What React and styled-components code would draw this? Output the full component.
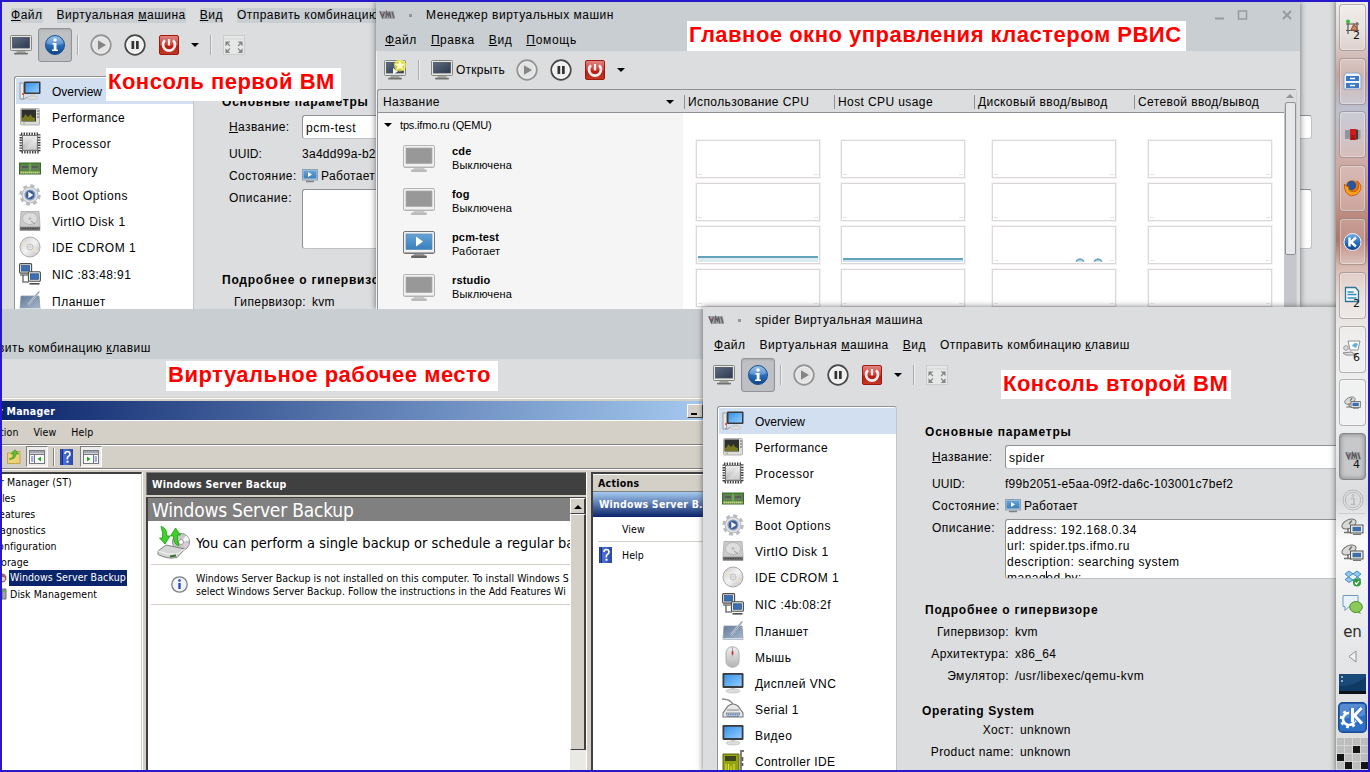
import React from "react";
import styled, { createGlobalStyle, css } from "styled-components";

const GlobalStyle = createGlobalStyle`
  * { box-sizing: border-box; }
  html, body { margin: 0; padding: 0; overflow: hidden; }
  body { font-family: "Liberation Sans", Arial, sans-serif; font-size: 12px; color: #000; }
  svg { display: block; flex: none; }
`;

const tahoma = css`font-family: "DejaVu Sans Condensed", "DejaVu Sans", sans-serif; font-stretch: condensed;`;

const Desktop = styled.div`
  position: relative;
  width: 1370px;
  height: 772px;
  overflow: hidden;
  background: #dcddde;
  &::after {
    content: "";
    position: absolute;
    inset: 0;
    border: 2px solid #2519c9;
    z-index: 20;
    pointer-events: none;
  }
`;

const Window = styled.section`
  position: absolute;
  left: ${(p) => p.$x}px;
  top: ${(p) => p.$y}px;
  width: ${(p) => p.$w}px;
  height: ${(p) => p.$h}px;
  display: flex;
  flex-direction: column;
  overflow: hidden;
  background: #dcddde;
  box-shadow: ${(p) => (p.$shadow ? "0 0 6px rgba(40,40,40,0.65)" : "none")};
`;

const Callout = styled.div`
  position: absolute;
  left: ${(p) => p.$x}px;
  top: ${(p) => p.$y}px;
  width: ${(p) => p.$w}px;
  height: ${(p) => p.$h}px;
  padding-left: 2px;
  z-index: 10;
  background: #fff;
  color: #fe0000;
  font-size: 22px;
  font-weight: bold;
  line-height: 28px;
  letter-spacing: 0.5px;
  white-space: nowrap;
`;

const Text = styled.span`
  letter-spacing: ${(p) => p.$ls ?? 0.3}px;
  white-space: nowrap;
`;

/* ---------- shared KDE window parts ---------- */

const TitleBar = styled.div`
  display: flex;
  align-items: center;
  height: ${(p) => p.$h}px;
  padding: 3px 1px 0 ${(p) => p.$pad}px;
  flex: none;
`;
const TitleDot = styled.i`
  width: 3px;
  height: 3px;
  margin: 0 14px;
  background: #93979a;
`;
const TitleButtons = styled.div`
  display: flex;
  margin-left: auto;
`;
const MenuBar = styled.nav`
  display: flex;
  gap: 14px;
  height: ${(p) => p.$h}px;
  padding: ${(p) => p.$top}px 0 0 ${(p) => p.$left}px;
  line-height: 15px;
  flex: none;
`;
const MenuItem = styled.span`
  white-space: nowrap;
  letter-spacing: ${(p) => p.$ls ?? 0.5}px;
  background: ${(p) => (p.$marked ? "#c9ced2" : "transparent")};
  height: 15px;
`;
const ToolBar = styled.div`
  display: flex;
  align-items: center;
  height: ${(p) => p.$h}px;
  padding-left: ${(p) => p.$left}px;
  flex: none;
`;
const ToolSlot = styled.div`
  display: flex;
  align-items: center;
  justify-content: center;
  gap: 3px;
  width: ${(p) => p.$w}px;
  height: 34px;
  flex: none;
`;
const PressedButton = styled(ToolSlot)`
  background: #bec0c3;
  border: 1px solid #909296;
  border-radius: 3px;
  box-shadow: inset 0 1px 2px rgba(0, 0, 0, 0.12);
`;
const Divider = styled.i`
  width: 2px;
  height: 20px;
  background: #a9abae;
  border-right: 1px solid #f0f0f0;
`;
const Caret = styled.i`
  border: 4px solid transparent;
  border-top-color: #000;
  border-bottom: 0;
`;

/* ---------- console window ---------- */

const ConsoleBody = styled.div`
  display: flex;
  flex: 1;
  padding: 14px 0 0 14px;
  min-height: 0;
`;
const DeviceList = styled.ul`
  width: 180px;
  margin: 0;
  padding: 1px 0 0 1px;
  list-style: none;
  background: #fff;
  border: 1px solid #8f9196;
  border-right-color: #c3c5c8;
  border-bottom: 0;
  border-radius: 3px 3px 0 0;
  flex: none;
  overflow: hidden;
`;
const Device = styled.li`
  display: flex;
  align-items: center;
  height: ${(p) => p.$h}px;
  padding-left: 3px;
  gap: 11px;
  background: ${(p) => (p.$selected ? "#d2dff0" : "transparent")};
`;
const DeviceName = styled(Text)`
  padding-top: 2px;
`;
const Details = styled.div`
  flex: 1;
  padding: 18px 0 0 28px;
  min-width: 0;
`;
const Heading = styled.h3`
  margin: ${(p) => p.$top || 0}px 0 0 ${(p) => p.$left || 0}px;
  height: 16px;
  font-size: 12px;
  line-height: 16px;
  letter-spacing: ${(p) => p.$ls}px;
  white-space: nowrap;
`;
const Field = styled.div`
  display: flex;
  height: ${(p) => p.$h || 22}px;
  margin-top: ${(p) => p.$top || 0}px;
  line-height: ${(p) => p.$lh || 22}px;
  padding-left: 7px;
`;
const FieldLabel = styled.label`
  width: 73px;
  flex: none;
  white-space: nowrap;
  letter-spacing: ${(p) => p.$ls ?? 0.4}px;
`;
const FieldValue = styled.div`
  display: flex;
  align-items: center;
  gap: 3px;
  white-space: nowrap;
  letter-spacing: ${(p) => p.$ls ?? 0.28}px;
`;
const TextBox = styled.div`
  width: ${(p) => p.$w}px;
  height: ${(p) => p.$h}px;
  margin-top: ${(p) => p.$top || 0}px;
  padding: ${(p) => p.$pad};
  flex: none;
  overflow: hidden;
  background: #fff;
  border: 1px solid #c0c2c5;
  border-top: 1px solid #8f9196;
  border-left-color: #8f9196;
  border-radius: 3px;
  line-height: ${(p) => p.$lh}px;
  letter-spacing: 0.5px;
  white-space: pre;
`;
const TextCursor = styled.i`
  display: inline-block;
  width: 1px;
  height: 13px;
  margin-right: -1px;
  vertical-align: -2px;
  background: #000;
`;
const SpecList = styled.div`
  padding-top: 3px;
`;
const Spec = styled.div`
  display: flex;
  gap: 6px;
  height: 22px;
  line-height: 22px;
  white-space: nowrap;
`;
const SpecLabel = styled.span`
  width: ${(p) => p.$w}px;
  text-align: right;
  letter-spacing: 0.4px;
`;

/* ---------- manager window ---------- */

const ManagerTop = styled.div`
  background: #c9ced2;
  height: 49px;
  flex: none;
`;
const ManagerFrame = styled.div`
  flex: 1;
  display: flex;
  flex-direction: column;
  margin-right: 3px;
  border-left: 1px solid #f0f1f2;
`;
const TableArea = styled.div`
  display: flex;
  flex: 1;
  border: 1px solid #8f9196;
  border-right-color: #cfd0d3;
  border-bottom: 0;
  border-radius: 3px 3px 0 0;
`;
const Table = styled.div`
  flex: 1;
  display: flex;
  flex-direction: column;
`;
const TableHead = styled.div`
  display: grid;
  grid-template-columns: 306px 150px 140px 160px 1fr;
  height: 23px;
  align-items: center;
  padding-top: 1px;
  border-bottom: 1px solid #8f9196;
`;
const HeadCell = styled.div`
  display: flex;
  align-items: center;
  justify-content: space-between;
  height: 14px;
  padding: 0 ${(p) => (p.$first ? 10 : 0)}px 0 ${(p) => (p.$first ? 5 : 3)}px;
  border-left: ${(p) => (p.$first ? 0 : 1)}px solid #8f9196;
  white-space: nowrap;
  letter-spacing: 0.4px;
`;
const TableBody = styled.div`
  display: flex;
  flex: 1;
  background: #fff;
`;
const NameColumn = styled.div`
  width: 305px;
  padding-top: 3px;
  background: #f5f5f5;
  font-size: 11px;
  flex: none;
`;
const GroupRow = styled.div`
  display: flex;
  align-items: center;
  gap: 8px;
  height: 19px;
  padding: 0 0 2px 6px;
  letter-spacing: -0.18px;
`;
const MachineRow = styled.div`
  display: flex;
  gap: 17px;
  height: 43px;
  padding: 10px 0 0 25px;
`;
const MachineText = styled.div`
  display: flex;
  flex-direction: column;
  line-height: 14px;
  margin-top: -1px;
  letter-spacing: 0.15px;
`;
const GraphGrid = styled.div`
  display: grid;
  grid-template-columns: 145px 151px 156px 126px;
  grid-auto-rows: 43px;
  padding: 27px 0 0 13px;
`;
const GraphBox = styled.div`
  width: 124px;
  height: 38px;
  border: 1px solid #dcd7d9;
  outline: 1px solid #f5f2f3;
  padding: 1px;
`;
const ScrollColumn = styled.div`
  width: 12px;
  display: flex;
  flex-direction: column;
  align-items: center;
  background: linear-gradient(#dcddde 12px, #c5c7cc 20px);
  flex: none;
`;
const ScrollThumb = styled.div`
  width: 11px;
  height: 153px;
  background: #e6e7e9;
  border: 1px solid #8f9196;
  border-radius: 2px;
  margin-top: 4px;
`;
const UpArrow = styled.i`
  margin-top: 4px;
  border: 4px solid transparent;
  border-bottom-color: #909296;
  border-top: 0;
`;

/* ---------- remote Windows desktop ---------- */

const RemoteTop = styled.div`
  display: flex;
  height: 50px;
  background: #c9ced2;
  padding-top: 32px;
  line-height: 15px;
  flex: none;
`;
const RemoteMenuItem = styled(MenuItem)`
  margin-left: -4px;
`;
const RemoteTools = styled.div`
  height: 38px;
  background: #dcddde;
  flex: none;
`;
const WinShell = styled.div`
  ${tahoma}
  display: flex;
  flex-direction: column;
  flex: 1;
  background: #d4d0c8;
  border-top: 1px solid #d4d0c8;
  box-shadow: inset 0 1px #fff;
  padding-top: 3px;
  font-size: 10.5px;
  letter-spacing: 0.1px;
  color: #000;
  min-height: 0;
`;
const WinCaption = styled.div`
  display: flex;
  align-items: center;
  justify-content: space-between;
  height: 19px;
  background: linear-gradient(90deg, #0a246a, #5a7ab0 50%, #a6caf0);
  color: #fff;
  font-weight: bold;
  padding-right: 9px;
  letter-spacing: 0.28px;
  flex: none;
`;
const CaptionText = styled.span`
  margin-left: -4px;
`;
const WinMinimize = styled.div`
  width: 16px;
  height: 14px;
  background: #d4d0c8;
  border: 1px solid #fff;
  border-right-color: #404040;
  border-bottom-color: #404040;
  padding: 8px 0 0 3px;
  &::after { content: ""; display: block; width: 6px; height: 2px; background: #000; }
`;
const WinBand = styled.div`
  display: flex;
  align-items: center;
  height: ${(p) => p.$h}px;
  border-bottom: 1px solid #808080;
  box-shadow: inset 0 1px #fff;
  padding-left: ${(p) => p.$left || 0}px;
  gap: ${(p) => p.$gap || 0}px;
  flex: none;
`;
const WinMenu = styled.span`
  margin-left: ${(p) => p.$shift || 0}px;
`;
const WinToggle = styled.div`
  width: 22px;
  height: 21px;
  margin-left: ${(p) => p.$shift || 0}px;
  display: flex;
  align-items: center;
  justify-content: center;
  border: 1px solid #808080;
  border-right-color: #fff;
  border-bottom-color: #fff;
  background: #eeece8;
`;
const WinSep = styled.i`
  width: 2px;
  height: 18px;
  background: #808080;
  border-right: 1px solid #fff;
`;
const WinPanes = styled.div`
  display: flex;
  flex: 1;
  padding-top: 3px;
  box-shadow: inset 0 1px #fff;
  min-height: 0;
`;
const TreePane = styled.div`
  width: 140px;
  background: #fff;
  border-top: 2px solid #404040;
  border-right: 1px solid #d4d0c8;
  box-shadow: 1px 0 #fff;
  margin-right: 4px;
  flex: none;
  overflow: hidden;
`;
const TreeRow = styled.div`
  display: flex;
  align-items: center;
  height: 16px;
  margin-left: ${(p) => p.$left}px;
  white-space: nowrap;
`;
const TreeSelected = styled.span`
  background: #0a246a;
  color: #fff;
  height: 16px;
  line-height: 15px;
  padding: 0 1px;
`;
const CenterPane = styled.div`
  width: 441px;
  display: flex;
  flex-direction: column;
  border-right: 1px solid #fff;
  margin-right: 4px;
  flex: none;
`;
const CenterHead = styled.div`
  height: 23px;
  line-height: 22px;
  padding-left: 5px;
  background: #404040;
  border-left: 1px solid #808080;
  border-top: 1px solid #808080;
  color: #fff;
  font-weight: bold;
  letter-spacing: 0.28px;
  flex: none;
`;
const CenterBody = styled.div`
  display: flex;
  flex: 1;
  margin-top: 2px;
  border-top: 1px solid #404040;
  border-left: 2px solid #404040;
  min-height: 0;
`;
const CenterContent = styled.div`
  flex: 1;
  background: #fff;
  overflow: hidden;
  min-width: 0;
`;
const BannerTitle = styled.div`
  height: 23px;
  background: #808080;
  color: #fff;
  font-size: 19px;
  line-height: 24px;
  padding-left: 4px;
  white-space: nowrap;
  letter-spacing: -0.2px;
`;
const PitchRow = styled.div`
  display: flex;
  align-items: center;
  gap: 6px;
  height: 44px;
  margin-left: 3px;
  padding-left: 6px;
  font-size: 14.5px;
  letter-spacing: 0.05px;
  border-bottom: 1px solid #d4d0c8;
  white-space: nowrap;
`;
const NoticeRow = styled.div`
  display: flex;
  align-items: center;
  gap: 8px;
  height: 40px;
  margin-left: 3px;
  padding-left: 20px;
  line-height: 13px;
  letter-spacing: 0.04px;
  border-bottom: 1px solid #d4d0c8;
  white-space: pre;
`;
const WinScroll = styled.div`
  width: 16px;
  background: #ebe9e5;
  display: flex;
  flex-direction: column;
  flex: none;
`;
const WinScrollPart = styled.div`
  height: ${(p) => p.$h}px;
  display: flex;
  justify-content: center;
  padding-top: 6px;
  background: #d4d0c8;
  border: 1px solid #fff;
  border-right: 2px solid #404040;
  border-bottom: 1px solid #404040;
  flex: none;
`;
const BlackUp = styled.i`
  height: 0;
  border: 4px solid transparent;
  border-bottom-color: #000;
  border-top: 0;
`;
const ActionPane = styled.div`
  flex: 1;
  background: #fff;
  border-top: 2px solid #404040;
  border-left: 2px solid #404040;
  overflow: hidden;
  white-space: nowrap;
`;
const ActionHead = styled.div`
  height: 18px;
  line-height: 17px;
  background: #d4d0c8;
  border-top: 1px solid #fff;
  border-bottom: 1px solid #808080;
  font-weight: bold;
  padding-left: 5px;
  letter-spacing: 0.28px;
`;
const ActionGroup = styled.div`
  height: 25px;
  line-height: 25px;
  background: linear-gradient(#a6caf0, #0a246a);
  color: #fff;
  font-weight: bold;
  padding-left: 6px;
  letter-spacing: 0.2px;
`;
const ActionItem = styled.div`
  display: flex;
  align-items: center;
  gap: 10px;
  height: 25px;
  margin-left: 5px;
  padding-left: ${(p) => p.$left}px;
  border-bottom: ${(p) => (p.$rule ? 1 : 0)}px solid #d4d0c8;
`;

/* ---------- task bar ---------- */

const TaskBar = styled.aside`
  position: absolute;
  right: 0;
  top: 0;
  width: 34px;
  height: 772px;
  padding: 4px 4px 2px 3px;
  display: flex;
  flex-direction: column;
  z-index: 5;
  background: linear-gradient(180deg, #f0edeb 0, #e0d7d3 35px, #c4a49f 75px, #bcc0cf 110px, #cfa9a3 165px, #c79b91 195px, #b07468 240px, #d8bcb3 268px, #e6dedb 300px, #ececec 345px, #eeeff0 420px, #d9dbdc 500px, #fbfbfb 540px, #e4e5e6 660px, #dcdddd 100%);
  box-shadow: 0 0 6px rgba(40, 40, 40, 0.7);
`;
const TaskButton = styled.div`
  width: 27px;
  height: 47px;
  margin-bottom: ${(p) => p.$gap ?? 6.6}px;
  display: flex;
  align-items: center;
  justify-content: center;
  position: relative;
  flex: none;
  border: 1px solid ${(p) => (p.$active ? "#85878a" : "rgba(120,110,110,0.5)")};
  border-radius: 4px;
  background: ${(p) => (p.$active ? "#c6c8ca" : "rgba(255,255,255,0.2)")};
  box-shadow: ${(p) => (p.$active ? "inset 0 0 5px rgba(0,0,0,0.4)" : "inset 0 0 0 1px rgba(255,255,255,0.35)")};
`;
const Count = styled.span`
  position: absolute;
  right: 5px;
  bottom: 8px;
  font-family: "DejaVu Sans", sans-serif;
  font-size: 11px;
  line-height: 12px;
  color: #111;
`;
const TrayItem = styled.div`
  height: ${(p) => p.$h}px;
  width: 27px;
  display: flex;
  align-items: center;
  justify-content: center;
  border-bottom: ${(p) => (p.$rule ? "1px solid #cccdce" : "0")};
  flex: none;
`;
const Layout = styled(TrayItem)`
  font-family: "DejaVu Sans", sans-serif;
  font-size: 15px;
  color: #2b2b2b;
`;
const Pager = styled.div`
  display: grid;
  grid-template-columns: repeat(4, 8px);
  grid-auto-rows: 8px;
  margin: 2px -4px 0 -2px;
  background: #c3c3c3;
`;
const PagerCell = styled.i`
  background: ${(p) => (p.$on ? "#141414" : "#bdbdbd")};
  border: solid #d4d4d4;
  border-width: 0 1px 1px 0;
`;

/* ---------- icons ---------- */

const HiddenSvg = styled.svg`
  position: absolute;
`;
const Defs = () => (
  <HiddenSvg width="0" height="0" aria-hidden="true">
    <defs>
      <linearGradient id="navy" x1="0" y1="0" x2="1" y2="1"><stop offset="0" stopColor="#5c6b81" /><stop offset="1" stopColor="#2d3a4d" /></linearGradient>
      <linearGradient id="sky" x1="0" y1="0" x2="1" y2="1"><stop offset="0" stopColor="#3b93e6" /><stop offset="1" stopColor="#8fcbff" /></linearGradient>
      <linearGradient id="steel" x1="0" y1="0" x2="0" y2="1"><stop offset="0" stopColor="#eeeeee" /><stop offset="1" stopColor="#b4b4b4" /></linearGradient>
      <linearGradient id="blueball" x1="0" y1="0" x2="0" y2="1"><stop offset="0" stopColor="#7fb2e3" /><stop offset=".5" stopColor="#2a70bd" /><stop offset="1" stopColor="#0d4187" /></linearGradient>
      <linearGradient id="red" x1="0" y1="0" x2="0" y2="1"><stop offset="0" stopColor="#e28a84" /><stop offset=".5" stopColor="#cb3b31" /><stop offset=".55" stopColor="#b51d12" /><stop offset="1" stopColor="#c33a25" /></linearGradient>
      <linearGradient id="bluescreen" x1="0" y1="0" x2="0" y2="1"><stop offset="0" stopColor="#65a3d8" /><stop offset="1" stopColor="#3a7ebc" /></linearGradient>
      <linearGradient id="disc" x1="0" y1="0" x2="1" y2="1"><stop offset="0" stopColor="#c9c9d0" /><stop offset=".5" stopColor="#f3f2f2" /><stop offset="1" stopColor="#bcbcc2" /></linearGradient>
      <linearGradient id="tablet" x1="0" y1="0" x2="1" y2="1"><stop offset="0" stopColor="#637a99" /><stop offset="1" stopColor="#a9bacd" /></linearGradient>
      <linearGradient id="winhelp" x1="0" y1="0" x2="1" y2="0"><stop offset="0" stopColor="#1d3a96" /><stop offset=".3" stopColor="#4c6fdc" /><stop offset="1" stopColor="#2b47a6" /></linearGradient>
    </defs>
  </HiddenSvg>
);

const Monitor = ({ star }) => (
  <svg width="22" height="20" viewBox="0 0 22 20">
    <rect x=".5" y=".5" width="21" height="15" rx="1" fill="#e6e7e4" stroke="#858783" />
    <rect x="2.500" y="2.500" width="17" height="10.500" fill="url(#navy)" stroke="#4a5361" strokeWidth=".8" />
    <path d="M7 16h8l1 2H6z" fill="#a5a7a3" />
    <rect x="4" y="17.700" width="14" height="1.800" rx=".9" fill="#6f716d" />
    {star && (
      <g>
        <path d="M9 8l5 3.500-5 3z" fill="#f4f4f4" />
        <circle cx="16" cy="5.500" r="6" fill="#f6f04c" opacity=".75" />
        <path d="M16 -.2l1.600 3.700 4.200.3-3.300 2.600 1.200 4.200-3.700-2.300-3.700 2.300 1.200-4.200-3.300-2.600 4.200-.3z" fill="#fffbd0" stroke="#efe235" strokeWidth=".6" />
      </g>
    )}
  </svg>
);
const InfoBall = () => (
  <svg width="22" height="22" viewBox="0 0 22 22">
    <circle cx="11" cy="11" r="9.500" fill="url(#blueball)" stroke="#1b4f92" />
    <path d="M2.500 9.500a8.600 8.600 0 0 1 17 0q-8.500 3-17 0z" fill="#fff" opacity=".22" />
    <circle cx="11" cy="6" r="1.800" fill="#fff" />
    <path d="M8.500 9h4v6.500h1.500V17h-6v-1.500h1.700v-5H8.500z" fill="#fff" />
  </svg>
);
const Play = () => (
  <svg width="22" height="22" viewBox="0 0 22 22">
    <circle cx="11" cy="11" r="9.700" fill="#e3e3e3" stroke="#959595" strokeWidth="1.900" />
    <circle cx="11" cy="11" r="8.200" fill="none" stroke="#f5f5f5" strokeWidth=".8" />
    <path d="M8 6.200l8 4.800-8 4.800z" fill="#858585" />
  </svg>
);
const Pause = () => (
  <svg width="22" height="22" viewBox="0 0 22 22">
    <circle cx="11" cy="11" r="9.700" fill="#efefef" stroke="#4a4a4a" strokeWidth="1.900" />
    <circle cx="11" cy="11" r="8.200" fill="none" stroke="#fff" strokeWidth="1" />
    <rect x="7.500" y="7" width="2.700" height="8" fill="#333" />
    <rect x="12" y="7" width="2.700" height="8" fill="#333" />
  </svg>
);
const Power = () => (
  <svg width="20" height="20" viewBox="0 0 20 20">
    <rect x=".5" y=".5" width="19" height="19" rx="1.500" fill="url(#red)" stroke="#a3170d" />
    <path d="M6 5.200a6 6 0 1 0 8 0" fill="none" stroke="#f6eeee" strokeWidth="2.700" />
    <path d="M10 4v6.500" stroke="#f6eeee" strokeWidth="2.300" />
  </svg>
);
const Fullscreen = () => (
  <svg width="22" height="20" viewBox="0 0 22 20">
    <rect x=".5" y=".5" width="21" height="19" fill="#e6e7e7" stroke="#cbcccc" />
    <path d="M1 4h20" stroke="#d2d3d3" />
    <path d="M3 7h3l-3 3zM4 8l3 3M19 7h-3l3 3zM18 8l-3 3M3 17.500h3l-3-3zM4 16.500l3-3M19 17.500h-3l3-3zM18 16.500l-3-3" fill="#858787" stroke="#858787" strokeWidth="1.100" />
  </svg>
);
const VmLogo = () => (
  <svg width="16" height="10" viewBox="0 0 16 10">
    <path d="M0 1h15l1 8H3z" fill="#a5a5a8" />
    <path d="M1 1.500l2.500 6L5.500 2M7 8l.5-6 2 4 1-4 1.200 6M13 2l2 6" stroke="#5d5e62" strokeWidth="1.300" fill="none" />
    <path d="M3 4l2 1" stroke="#a5434a" />
  </svg>
);
const BigMonitor = ({ on }) => (
  <svg width="32" height="28" viewBox="0 0 32 28">
    <rect x=".5" y=".5" width="31" height="22" rx="1.500" fill="#f1f1f1" stroke={on ? "#777" : "#b5b5b5"} />
    <rect x="3" y="3" width="26" height="15.500" fill={on ? "url(#bluescreen)" : "#989898"} stroke={on ? "#5b8cb5" : "#aaa"} strokeWidth=".7" />
    {on && <path d="M13 5.500l7 5-7 5z" fill="#fff" />}
    <path d="M1 21.500h30" stroke={on ? "#a9a9a9" : "#d5d5d5"} />
    <path d="M11 23h10l1 2H10z" fill={on ? "#999" : "#c9c9c9"} />
    <rect x="8" y="24.500" width="16" height="2.500" rx="1.200" fill={on ? "#666" : "#bababa"} />
  </svg>
);
const StateIcon = () => (
  <svg width="16" height="14" viewBox="0 0 16 14">
    <rect x=".5" y=".5" width="15" height="10.500" fill="#c5d3df" stroke="#8ba0b1" />
    <rect x="1.500" y="1.500" width="13" height="8" fill="url(#bluescreen)" />
    <path d="M6 3l4 2.500L6 8z" fill="#fff" />
    <path d="M4 12.500h8" stroke="#7e8286" strokeWidth="1.500" />
  </svg>
);

const DeviceIcon = ({ kind }) => {
  const art = {
    overview: (
      <g>
        <rect x="1" y="3" width="3.500" height="16" fill="#e8e8e6" stroke="#8b8d8a" strokeWidth=".8" /><circle cx="4" cy="14" r="1" fill="#e33" />
        <path d="M3 19q3 1 5-2" fill="none" stroke="#999" />
        <rect x="5" y="1.500" width="16.500" height="12.500" rx="1" fill="#3a3b3c" />
        <rect x="6.500" y="3" width="13.500" height="9.500" fill="url(#sky)" />
        <path d="M11 14h5v3h-5z" fill="#d5d5d5" /><ellipse cx="13.500" cy="17.700" rx="5.500" ry="1.700" fill="#dfe0de" stroke="#b2b3b1" strokeWidth=".6" />
      </g>
    ),
    performance: (
      <g>
        <rect x="1.500" y="2.500" width="19" height="16.500" rx="1" fill="#dcdcd8" stroke="#b3b3af" />
        <rect x="2.500" y="3.500" width="14.500" height="12" fill="#2f302e" />
        <path d="M3 15v-3l2-1 1-3 2 2 1.500 1 2-3 1.500 3 3 1v3z" fill="#77781f" />
        <path d="M18 5h2M18 8h2M18 11h2" stroke="#5b5b58" />
        <circle cx="5" cy="17.300" r=".8" fill="#7ab648" />
      </g>
    ),
    processor: (
      <g>
        <rect x="2" y="2" width="18" height="18" fill="none" stroke="#3f3f3f" strokeWidth="3" strokeDasharray="1.400 1.200" />
        <rect x="3.500" y="3.500" width="15" height="15" fill="url(#steel)" stroke="#777" />
        <path d="M5 17L17 5v12z" fill="#fff" opacity=".3" />
      </g>
    ),
    memory: (
      <g>
        <rect x=".5" y="5" width="21" height="11" fill="#4f8a3a" stroke="#38692a" />
        <path d="M2 7h8v5H2zM12 7h8v5h-8z" fill="#6b7a66" /><path d="M3 9h6M13 9h6" stroke="#3a4237" />
        <path d="M1.500 14.500h19" stroke="#eee79c" strokeWidth="2" strokeDasharray="1.300 .7" />
        <path d="M11 5.500v8" stroke="#7cd34d" />
      </g>
    ),
    boot: (
      <g>
        <circle cx="11" cy="11" r="9" fill="none" stroke="#b9bbbd" strokeWidth="3.400" strokeDasharray="3.800 3.270" />
        <circle cx="11" cy="11" r="8" fill="#e0e1e3" stroke="#b5b7ba" />
        <circle cx="11" cy="11" r="5" fill="#3d5d94" stroke="#8ea2c4" strokeWidth="1.200" />
        <path d="M9.300 7.800l5 3.200-5 3.200z" fill="#fff" />
      </g>
    ),
    disk: (
      <g>
        <path d="M2 1.500h18l1 14v5H1v-5z" fill="#c9cac9" stroke="#a9aaa9" strokeWidth=".8" />
        <ellipse cx="11" cy="8.500" rx="7.500" ry="6" fill="#dedede" stroke="#aeaeae" strokeWidth=".8" />
        <circle cx="11" cy="8.500" r="1.500" fill="#bbb" /><path d="M16 14l-4-3" stroke="#999" />
        <rect x="1" y="16.800" width="20" height="3.500" fill="#6c6e6c" /><path d="M3 18.500h16" stroke="#474947" strokeDasharray="1.500 1" />
      </g>
    ),
    cdrom: (
      <g>
        <circle cx="11" cy="11" r="10" fill="url(#disc)" stroke="#a4a4a4" strokeWidth=".9" />
        <path d="M11 11L3.500 6M11 11l7.500 5" stroke="#f0e6bd" strokeWidth="1.700" opacity=".8" />
        <circle cx="11" cy="11" r="3" fill="#f0f0f0" stroke="#b2b2b2" strokeWidth=".8" /><circle cx="11" cy="11" r="1.200" fill="#fff" stroke="#999" strokeWidth=".5" />
      </g>
    ),
    nic: (
      <g stroke="#4a4d49" strokeWidth="1.100">
        <path d="M4 12v7h6" fill="none" stroke="#7b7d79" strokeWidth="1.600" />
        <rect x=".6" y=".6" width="12" height="9.500" rx="1" fill="#e8e8e5" /><rect x="2.600" y="2.600" width="8" height="5.500" fill="#3a6fb3" stroke="#274e80" strokeWidth=".7" />
        <path d="M1 12h8" />
        <rect x="9.400" y="8.800" width="12" height="9.500" rx="1" fill="#e8e8e5" /><rect x="11.400" y="10.800" width="8" height="5.500" fill="#3a6fb3" stroke="#274e80" strokeWidth=".7" />
        <path d="M10.500 20.800h10" strokeWidth="1.600" />
      </g>
    ),
    tablet: (
      <g>
        <path d="M2 6h18l1 13.500H1z" fill="url(#tablet)" stroke="#8797aa" strokeWidth=".8" />
        <path d="M1 18.800h20" stroke="#dfe5ec" strokeWidth="1.300" />
        <path d="M20.500 1L9 15" stroke="#ccd3da" strokeWidth="2" /><path d="M20 2L9 15" stroke="#66788c" strokeWidth=".7" />
      </g>
    ),
    mouse: (
      <g>
        <rect x="4" y=".8" width="13" height="20.400" rx="6" fill="url(#steel)" stroke="#b0b0b0" />
        <path d="M10.500 1.500v9" stroke="#a5a5a5" /><rect x="9.600" y="5" width="1.800" height="4" rx=".9" fill="#c33" />
      </g>
    ),
    screen: (
      <g>
        <rect x=".5" y="1" width="21" height="15" rx="1.200" fill="#3b3c3f" />
        <rect x="2.300" y="2.800" width="17.400" height="11.200" fill="url(#sky)" />
        <path d="M9 16h4v2H9z" fill="#d4d5d3" /><ellipse cx="11" cy="19" rx="7" ry="2" fill="#dddedc" stroke="#b8b9b7" strokeWidth=".6" />
      </g>
    ),
    serial: (
      <g>
        <path d="M0 1q9 0 11 6" fill="none" stroke="#8a8a8a" strokeWidth="1.300" />
        <path d="M6 8q5-4 10 0l5 7v4H1v-4z" fill="#e8e8e8" stroke="#777" strokeWidth="1.100" />
        <path d="M5 12h12" stroke="#888" /><path d="M4 15h14l-1.500 3.500h-11z" fill="#b9cde6" stroke="#5c6d80" strokeWidth=".7" /><path d="M6 16.700h10" stroke="#40628d" strokeDasharray="1.200 1" />
      </g>
    ),
    controller: (
      <g>
        <path d="M1 4h16v17H1z" fill="#95a313" stroke="#5d6613" /><rect x="3" y="6" width="11" height="5" fill="#3c4422" />
        <path d="M4 14v6M6.500 14v6M9 16v5M12 14v7" stroke="#e0e33a" strokeWidth="1.100" />
        <path d="M22 1h-3v20" fill="none" stroke="#747672" strokeWidth="1.800" /><path d="M20.500 7v4M20.500 13v3" stroke="#555" strokeWidth="1.600" />
      </g>
    ),
  };
  return <svg width="22" height="22" viewBox="0 0 22 22">{art[kind]}</svg>;
};

const FolderUp = () => (
  <svg width="14" height="15" viewBox="0 0 14 15">
    <path d="M.5 4h4l1-1.500h7.500v12H.5z" fill="#eed278" stroke="#b9973c" strokeWidth=".8" />
    <path d="M2 10q4 0 4.500-5H4.200L8 .8l3.800 4.200H9q-.5 6-7 5z" fill="#59c236" stroke="#2f8a1c" strokeWidth=".6" />
  </svg>
);
const PaneIcon = ({ flip }) => (
  <svg width="16" height="14" viewBox="0 0 16 14">
    <rect x=".5" y=".5" width="15" height="13" fill="#fff" stroke="#77787d" />
    <rect x="1" y="1" width="14" height="2.500" fill="#a3a6b0" /><path d="M1 4.500h14" stroke="#77787d" />
    <g transform={flip ? "matrix(-1 0 0 1 16 0)" : undefined}>
      <path d="M5.500 5v8" stroke="#77787d" /><path d="M2 7h2.500M2 9h2.500M2 11h2.500" stroke="#4563b5" />
      <path d="M12 6.500v5L8.500 9z" fill="#1fae1f" />
    </g>
  </svg>
);
const HelpBook = () => (
  <svg width="13" height="16" viewBox="0 0 13 16">
    <rect width="13" height="16" fill="url(#winhelp)" /><path d="M2.500 0v16" stroke="#17307f" />
    <path d="M5 5q0-2.500 2.500-2.500T10 5q0 1.500-1.500 2.300T7.400 10.300" fill="none" stroke="#fff" strokeWidth="1.700" /><rect x="6.500" y="11.700" width="2" height="2" fill="#fff" />
  </svg>
);
const BackupIcon = () => (
  <svg width="33" height="33" viewBox="0 0 33 33">
    <circle cx="24" cy="16" r="8.500" fill="#c9c9cb" stroke="#8b8b8b" /><path d="M24 16l5-6.500a8 8 0 0 1 3 5z" fill="#f8f8f8" /><path d="M24 16l8 2-3 5z" fill="#e3c9d8" /><circle cx="24" cy="16" r="2.500" fill="#fff" stroke="#999" />
    <path d="M1 25l8-6 19 4-8 8.500q-9 2-19-3z" fill="#d5d6d6" stroke="#7f8080" /><path d="M1 25q9 4.500 19 3l8-5" fill="none" stroke="#f5f5f5" /><path d="M13 30.500l6-1" stroke="#3a6b2c" strokeWidth="2" />
    <path d="M4 .500q6 1 6 9.500h3L8 18l-5.500-6h3Q6 6 4 .500z" fill="#3fd02c" stroke="#1d9a12" strokeWidth=".8" />
    <path d="M22 20q-6-2-5.500-10h-3L18.500 2l5 7h-3q-.5 6 1.500 11z" fill="#3fd02c" stroke="#1d9a12" strokeWidth=".8" />
  </svg>
);
const NoticeIcon = () => (
  <svg width="17" height="17" viewBox="0 0 17 17">
    <circle cx="8.500" cy="8.500" r="7.700" fill="#f2f3f6" stroke="#7c7f88" strokeWidth="1.300" />
    <circle cx="8.500" cy="4.500" r="1.300" fill="#2348b5" /><path d="M8.500 7v6" stroke="#2348b5" strokeWidth="2.300" />
  </svg>
);

const Dish = ({ w = 23, h = 17 }) => (
  <svg width={w} height={h} viewBox="0 0 23 17">
    <ellipse cx="8" cy="6" rx="7.500" ry="4.300" transform="rotate(-25 8 6)" fill="#d9dad8" stroke="#6e706d" />
    <path d="M8 6l3-3.500M7 10v4M3 14.500h8" stroke="#6e706d" strokeWidth="1.500" />
    <rect x="9.500" y="7" width="12.500" height="8" fill="#ecece9" stroke="#555753" /><rect x="11.500" y="8.800" width="8.500" height="4.500" fill="#3d6eb0" />
    <path d="M12 16.300h8" stroke="#555" />
  </svg>
);
const TaskArt = ({ kind }) => {
  const art = {
    graph: <g fill="none" stroke="#555" strokeWidth="1.200"><path d="M6 5v12M4 7h13M4 13.500h13M15 5v8" /><path d="M9 13l3-6 3.500 6z" fill="#d78b62" stroke="#9c5a3d" /><circle cx="6" cy="4.500" r="2" fill="#2cc12c" stroke="none" /></g>,
    cabinet: <g><path d="M4 3h13l2 3v13H2V6z" fill="#eef4fa" stroke="#8fa5bd" /><rect x="4" y="6" width="13" height="5" fill="#3b78c9" /><rect x="4" y="13" width="13" height="5" fill="#3b78c9" /><path d="M8 8.500h5M8 15.500h5" stroke="#fff" strokeWidth="1.700" /></g>,
    film: <g><rect x="3" y="6" width="5" height="9" fill="#8d979d" /><rect x="8" y="5" width="6" height="11" fill="#d21c1c" /><path d="M10 16v-5M12 16v-5" stroke="#7a1010" /><rect x="14" y="5.500" width="2" height="10" fill="#3a3a3a" /><rect x="16" y="6" width="2.500" height="9" fill="#99a0a4" /></g>,
    fox: <g><circle cx="10.500" cy="11" r="7.700" fill="#e87814" /><circle cx="9.500" cy="8.500" r="4.700" fill="#28559b" /><path d="M2.500 7q1 3 4.500 2.500-1.500 4 3 5t6-3q2-4-1-7.500 5 3 3.500 8.500T9 19Q1.500 16 2.500 7z" fill="#f7a21c" stroke="#b8470e" strokeWidth=".7" /></g>,
    k: <g><circle cx="10.500" cy="11" r="8.500" fill="url(#blueball)" stroke="#e9f2fa" /><path d="M7.500 6.500v9M14 6.500L9 11l5 4.500" stroke="#fff" strokeWidth="2.400" fill="none" /></g>,
    doc: <g><path d="M3.500 3.500h10l3 3.500v10.500h-13z" fill="#f5f9fb" stroke="#2e7398" strokeWidth="1.300" /><path d="M5.500 8h6M5.500 10.500h9M5.500 14h9" stroke="#3c8fb9" strokeWidth="1.500" /></g>,
    laptop: <g><path d="M6 3h12l-2 9H8z" fill="#fff" stroke="#8b8f92" /><path d="M10 8q2-5 6-2l-2 4z" fill="#65b2d8" /><path d="M1 15l8-1 6 3H4z" fill="#e1e2e3" stroke="#888" /><circle cx="4" cy="10" r="2.300" fill="#ddd" stroke="#999" /></g>,
  };
  return <svg width="21" height="22" viewBox="0 0 21 22">{art[kind]}</svg>;
};

/* ---------- screens ---------- */

const devices = [
  ["overview", "Overview", 0],
  ["performance", "Performance", 0.4],
  ["processor", "Processor", 0.6],
  ["memory", "Memory", 0.45],
  ["boot", "Boot Options", 0.55],
  ["disk", "VirtIO Disk 1", 0.5],
  ["cdrom", "IDE CDROM 1", 0.5],
  ["nic", null, 0.4],
  ["tablet", "Планшет", 0.5],
  ["mouse", "Мышь", 0.5],
  ["screen", "Дисплей VNC", 0.45],
  ["serial", "Serial 1", 0.4],
  ["screen", "Видео", 0.45],
  ["controller", "Controller IDE", 0.35],
];

const ConsoleContent = ({ marked, name, uuid, nic, boxWidth, notes, rows }) => (
  <>
    <MenuBar $h={28} $top={8} $left={11}>
      <MenuItem $marked={marked}><u>Ф</u>айл</MenuItem>
      <MenuItem $marked={marked}>Виртуальная <u>м</u>ашина</MenuItem>
      <MenuItem $marked={marked}><u>В</u>ид</MenuItem>
      <MenuItem $marked={marked} $ls={0.45}>Отправить комбинацию <u>к</u>лавиш</MenuItem>
    </MenuBar>
    <ToolBar $h={34} $left={4}>
      <ToolSlot $w={34}><Monitor /></ToolSlot>
      <PressedButton $w={34}><InfoBall /></PressedButton>
      <ToolSlot $w={12}><Divider /></ToolSlot>
      <ToolSlot $w={34}><Play /></ToolSlot>
      <ToolSlot $w={34}><Pause /></ToolSlot>
      <ToolSlot $w={34}><Power /></ToolSlot>
      <ToolSlot $w={18}><Caret /></ToolSlot>
      <ToolSlot $w={13}><Divider /></ToolSlot>
      <ToolSlot $w={34}><Fullscreen /></ToolSlot>
    </ToolBar>
    <ConsoleBody>
      <DeviceList>
        {devices.slice(0, rows).map(([kind, label, ls], i) => (
          <Device key={i} $h={kind === "nic" ? 28 : 26} $selected={i === 0}>
            <DeviceIcon kind={kind} />
            <DeviceName $ls={ls}>{label || nic}</DeviceName>
          </Device>
        ))}
      </DeviceList>
      <Details>
        <Heading $ls={0.8}>Основные параметры</Heading>
        <Field $top={5} $h={24} $lh={25}>
          <FieldLabel><u>Н</u>азвание:</FieldLabel>
          <TextBox $w={boxWidth} $h={24} $lh={24} $pad="0 0 0 3px">{name}</TextBox>
        </Field>
        <Field $top={4}>
          <FieldLabel $ls={0.05}>UUID:</FieldLabel>
          <FieldValue>{uuid}</FieldValue>
        </Field>
        <Field>
          <FieldLabel $ls={0.45}>Состояние:</FieldLabel>
          <FieldValue $ls={0.35}><StateIcon />Работает</FieldValue>
        </Field>
        <Field $h={63}>
          <FieldLabel $ls={0.5}>Описание:</FieldLabel>
          <TextBox $w={boxWidth} $h={60} $top={2} $lh={16} $pad="2px 0 0 1px">{notes}</TextBox>
        </Field>
        <Heading $top={22} $ls={0.78}>Подробнее о гипервизоре</Heading>
        <SpecList>
          <Spec><SpecLabel $w={84}>Гипервизор:</SpecLabel><Text>kvm</Text></Spec>
          <Spec><SpecLabel $w={84}>Архитектура:</SpecLabel><Text>x86_64</Text></Spec>
          <Spec><SpecLabel $w={84}>Эмулятор:</SpecLabel><Text $ls={0.43}>/usr/libexec/qemu-kvm</Text></Spec>
        </SpecList>
        <Heading $top={16} $left={-3} $ls={0.62}>Operating System</Heading>
        <Spec><SpecLabel $w={89}>Хост:</SpecLabel><Text $ls={0.4}>unknown</Text></Spec>
        <Spec><SpecLabel $w={89}>Product name:</SpecLabel><Text $ls={0.4}>unknown</Text></Spec>
      </Details>
    </ConsoleBody>
  </>
);

const machines = [
  { name: "cde", state: "Выключена" },
  { name: "fog", state: "Выключена" },
  { name: "pcm-test", state: "Работает", on: true },
  { name: "rstudio", state: "Выключена" },
];

const Graph = ({ shape }) => (
  <GraphBox>
    <svg width="120" height="34" viewBox="0 0 120 34">
      {shape === "high" && <g><rect x="0" y="29" width="120" height="5" fill="#dcebf0" /><path d="M0 29h120" stroke="#64a2b9" strokeWidth="2" /></g>}
      {shape === "low" && <g><rect x="0" y="31" width="120" height="3" fill="#cfe4ec" /><path d="M0 31h120" stroke="#64a2b9" strokeWidth="2" /></g>}
      {shape === "bumps" && <g fill="#a9d0de" stroke="#64a2b9" strokeWidth="1.600"><path d="M82 33.500q4-5 8 0M100 33.500q4-5 8 0" /></g>}
      {(!shape || shape === "bumps") && <path d="M0 32.500h4M116 32.500h4" stroke="#d7e8ee" />}
    </svg>
  </GraphBox>
);

const Manager = () => (
  <Window $x={376} $y={2} $w={924} $h={307} $shadow>
    <ManagerTop>
      <TitleBar $h={23} $pad={3}>
        <VmLogo /><TitleDot /><Text $ls={0.5}>Менеджер виртуальных машин</Text>
        <TitleButtons>
          <svg width="84" height="12" viewBox="0 0 84 12" fill="none" stroke="#979b9f" strokeWidth="1.500">
            <path d="M0 9.500h9" strokeWidth="2" /><rect x="23.500" y="2" width="8" height="8" /><path d="M68 2l8 8M76 2l-8 8" strokeWidth="2" />
          </svg>
        </TitleButtons>
      </TitleBar>
      <MenuBar $h={26} $top={8} $left={9}>
        <MenuItem $ls={0.6}><u>Ф</u>айл</MenuItem>
        <MenuItem $ls={0.55}><u>П</u>равка</MenuItem>
        <MenuItem $ls={0.6}><u>В</u>ид</MenuItem>
        <MenuItem $ls={0.7}><u>П</u>омощь</MenuItem>
      </MenuBar>
    </ManagerTop>
    <ManagerFrame>
      <ToolBar $h={38} $left={1}>
        <ToolSlot $w={34}><Monitor star /></ToolSlot>
        <ToolSlot $w={14}><Divider /></ToolSlot>
        <ToolSlot $w={84}><Monitor /><Text $ls={0.3}>Открыть</Text></ToolSlot>
        <ToolSlot $w={34}><Play /></ToolSlot>
        <ToolSlot $w={34}><Pause /></ToolSlot>
        <ToolSlot $w={34}><Power /></ToolSlot>
        <ToolSlot $w={18}><Caret /></ToolSlot>
      </ToolBar>
      <TableArea>
        <Table>
          <TableHead>
            <HeadCell $first>Название<Caret /></HeadCell>
            <HeadCell>Использование CPU</HeadCell>
            <HeadCell>Host CPU usage</HeadCell>
            <HeadCell>Дисковый ввод/вывод</HeadCell>
            <HeadCell>Сетевой ввод/вывод</HeadCell>
          </TableHead>
          <TableBody>
            <NameColumn>
              <GroupRow><Caret />tps.ifmo.ru (QEMU)</GroupRow>
              {machines.map((m) => (
                <MachineRow key={m.name}>
                  <BigMonitor on={m.on} />
                  <MachineText><b>{m.name}</b><span>{m.state}</span></MachineText>
                </MachineRow>
              ))}
            </NameColumn>
            <GraphGrid>
              {machines.flatMap((m) =>
                [0, 1, 2, 3].map((c) => <Graph key={m.name + c} shape={m.on ? ["high", "low", "bumps", null][c] : null} />)
              )}
            </GraphGrid>
          </TableBody>
        </Table>
        <ScrollColumn><UpArrow /><ScrollThumb /></ScrollColumn>
      </TableArea>
    </ManagerFrame>
  </Window>
);

const Remote = () => (
  <Window $x={2} $y={309} $w={710} $h={463}>
    <RemoteTop><RemoteMenuItem $ls={0.45}>вить комбинацию <u>к</u>лавиш</RemoteMenuItem></RemoteTop>
    <RemoteTools />
    <WinShell>
      <WinCaption><CaptionText>r Manager</CaptionText><WinMinimize /></WinCaption>
      <WinBand $h={25} $gap={15}><WinMenu $shift={-2}>tion</WinMenu><WinMenu>View</WinMenu><WinMenu>Help</WinMenu></WinBand>
      <WinBand $h={24} $left={5} $gap={5}>
        <FolderUp /><WinToggle><PaneIcon /></WinToggle><WinSep /><HelpBook /><WinToggle $shift={2}><PaneIcon flip /></WinToggle>
      </WinBand>
      <WinPanes>
        <TreePane>
          <TreeRow $left={-2}>r Manager (ST)</TreeRow>
          <TreeRow $left={-6}>oles</TreeRow>
          <TreeRow $left={-3}>eatures</TreeRow>
          <TreeRow $left={-2}>agnostics</TreeRow>
          <TreeRow $left={-4}>onfiguration</TreeRow>
          <TreeRow $left={-1}>orage</TreeRow>
          <TreeRow $left={0}>
            <svg width="7" height="16" viewBox="0 0 7 16"><circle cx="0" cy="8" r="4.500" fill="#996b55" /><circle cx="1" cy="9" r="2" fill="#ddd" /></svg>
            <TreeSelected>Windows Server Backup</TreeSelected>
          </TreeRow>
          <TreeRow $left={0}>
            <svg width="8" height="16" viewBox="0 0 8 16"><path d="M0 3h4v10H0z" fill="#a5a6a8" stroke="#6e7072" /><rect x="1" y="4" width="2" height="2" fill="#49c030" /></svg>
            Disk Management
          </TreeRow>
        </TreePane>
        <CenterPane>
          <CenterHead>Windows Server Backup</CenterHead>
          <CenterBody>
            <CenterContent>
              <BannerTitle>Windows Server Backup</BannerTitle>
              <PitchRow><BackupIcon /><span>You can perform a single backup or schedule a regular ba</span></PitchRow>
              <NoticeRow><NoticeIcon /><span>{"Windows Server Backup is not installed on this computer. To install Windows S\nselect Windows Server Backup. Follow the instructions in the Add Features Wi"}</span></NoticeRow>
            </CenterContent>
            <WinScroll><WinScrollPart $h={16}><BlackUp /></WinScrollPart><WinScrollPart $h={236} /></WinScroll>
          </CenterBody>
        </CenterPane>
        <ActionPane>
          <ActionHead>Actions</ActionHead>
          <ActionGroup>Windows Server B.</ActionGroup>
          <ActionItem $left={24} $rule>View</ActionItem>
          <ActionItem $left={1}><HelpBook />Help</ActionItem>
        </ActionPane>
      </WinPanes>
    </WinShell>
  </Window>
);

const Tray = () => (
  <TaskBar>
    <TaskButton><TaskArt kind="graph" /><Count>2</Count></TaskButton>
    <TaskButton><TaskArt kind="cabinet" /></TaskButton>
    <TaskButton><TaskArt kind="film" /></TaskButton>
    <TaskButton><TaskArt kind="fox" /></TaskButton>
    <TaskButton><TaskArt kind="k" /></TaskButton>
    <TaskButton><TaskArt kind="doc" /><Count>2</Count></TaskButton>
    <TaskButton><TaskArt kind="laptop" /><Count>6</Count></TaskButton>
    <TaskButton><Dish w={17} h={13} /></TaskButton>
    <TaskButton $active $gap={8}><VmLogo /><Count>4</Count></TaskButton>
    <TrayItem $h={26} $rule>
      <svg width="22" height="22" viewBox="0 0 22 22" fill="none" stroke="#b9babb"><circle cx="11" cy="11" r="10" /><circle cx="11" cy="11" r="7.700" /><circle cx="11" cy="6.500" r="1" /><path d="M9 9.500h3v6h1.500M8.500 15.500h3" strokeWidth="1.500" /></svg>
    </TrayItem>
    <TrayItem $h={26}><Dish /></TrayItem>
    <TrayItem $h={26}><Dish /></TrayItem>
    <TrayItem $h={26}>
      <svg width="18" height="17" viewBox="0 0 18 17"><path d="M5 1l4 2.800L4.500 7 1 4zM13 1L9 3.800 13.500 7 17 4zM1 9.500L4.500 7 9 10l-4 2.500zM17 9.500L13.500 7 9 10l4 2.500z" fill="#8fc7ef" stroke="#2c7bbd" strokeWidth=".8" /><circle cx="13" cy="12.500" r="4" fill="#2f9e3b" /><path d="M11 12.500l1.500 1.700L15 11" stroke="#fff" fill="none" strokeWidth="1.200" /></svg>
    </TrayItem>
    <TrayItem $h={26}>
      <svg width="21" height="21" viewBox="0 0 21 21"><path d="M1 1.500h15v11H7l-4 4v-4H1z" fill="#e9f3fb" stroke="#6f98be" /><ellipse cx="14" cy="13" rx="6.300" ry="5.500" fill="#8cc95b" stroke="#4d8e2b" /><path d="M17 17l2.500 3-5-1.500z" fill="#6fae40" /></svg>
    </TrayItem>
    <Layout $h={28}>en</Layout>
    <TrayItem $h={22}><svg width="9" height="13" viewBox="0 0 9 13"><path d="M8 1v11L1 6.500z" fill="#f2f2f2" stroke="#8e9092" /></svg></TrayItem>
    <TrayItem $h={32}>
      <svg width="27" height="20" viewBox="0 0 27 20"><rect width="27" height="20" fill="#1a4a7a" /><path d="M0 12q14 1 27-9v17H0z" fill="#0f3a63" /><path d="M0 18.500h27" stroke="#0a1119" strokeWidth="3" /><path d="M2 3h2M2 7h2" stroke="#88b1d6" strokeWidth="2" /></svg>
    </TrayItem>
    <TrayItem $h={36}>
      <svg width="29" height="31" viewBox="0 0 29 31"><rect x=".7" y=".7" width="27.600" height="29.600" rx="4" fill="#2d6fc4" stroke="#1b4b93" strokeWidth="1.400" /><path d="M2 15V5q0-3 3-3h19q3 0 3 3v8q-12 5-25 2z" fill="#fff" opacity=".2" />
        <circle cx="11" cy="17" r="6" fill="none" stroke="#fff" strokeWidth="2.500" /><circle cx="11" cy="17" r="8" fill="none" stroke="#fff" strokeWidth="2.500" strokeDasharray="2.800 3.480" /><path d="M14 6v14M23 6l-6.500 7 7 8" stroke="#2d6fc4" strokeWidth="5.500" fill="none" /><path d="M14.500 6v14M23.500 6l-7 7.500 7.500 8" stroke="#fff" strokeWidth="3.200" fill="none" /></svg>
    </TrayItem>
    <Pager>
      {[0, 0, 0, 0, 0, 0, 1, 0, 1, 0, 0, 0, 0, 1, 0, 1].map((on, i) => <PagerCell key={i} $on={on} />)}
    </Pager>
  </TaskBar>
);

export default function App() {
  return (
    <Desktop>
      <GlobalStyle />
      <Defs />
      <Window $x={0} $y={0} $w={1334} $h={310}>
        <ConsoleContent marked name="pcm-test" uuid="3a4dd99a-b2" nic="NIC :83:48:91" boxWidth={1010} notes="" rows={9} />
      </Window>
      <Manager />
      <Remote />
      <Window $x={703} $y={307} $w={640} $h={465} $shadow>
        <TitleBar $h={23} $pad={5}>
          <VmLogo /><TitleDot /><Text $ls={0.47}>spider Виртуальная машина</Text>
        </TitleBar>
        <ConsoleContent
          name="spider"
          uuid="f99b2051-e5aa-09f2-da6c-103001c7bef2"
          nic="NIC :4b:08:2f"
          boxWidth={400}
          notes={<>{"address: 192.168.0.34\nurl: spider.tps.ifmo.ru\ndescription: searching system\nmanag"}<TextCursor />{"ed by:"}</>}
          rows={14}
        />
      </Window>
      <Tray />
      <Callout $x={106} $y={68} $w={235} $h={33}>Консоль первой ВМ</Callout>
      <Callout $x={687} $y={21} $w={499} $h={30}>Главное окно управления кластером РВИС</Callout>
      <Callout $x={166} $y={361} $w={332} $h={30}>Виртуальное рабочее место</Callout>
      <Callout $x={1001} $y={370} $w={230} $h={29}>Консоль второй ВМ</Callout>
    </Desktop>
  );
}
